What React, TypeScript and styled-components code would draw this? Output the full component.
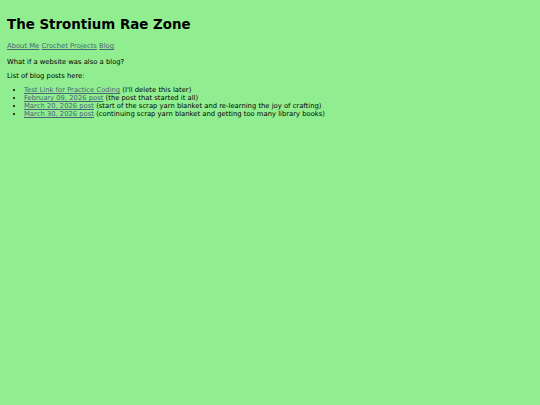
import React from "react";
import styled, { createGlobalStyle } from "styled-components";

const GlobalStyle = createGlobalStyle`
  html, body {
    margin: 0;
    background: #90ee90;
  }
  body {
    font-family: "DejaVu Sans", Verdana, sans-serif;
    font-size: 6.8px;
    color: #000;
  }
`;

const Page = styled.div`
  padding: 7px;
`;

const Title = styled.h1`
  font-size: 13.4px;
  font-weight: bold;
  margin: 10px 0 10px;
`;

const Nav = styled.nav`
  margin: 0 0 8px;
`;

const Link = styled.a`
  color: #4a6478;
  text-decoration: underline;
`;

const Para = styled.p`
  margin: 6px 0 5px;
`;

const PostList = styled.ul`
  margin: 6px 0;
  padding-left: 17px;
  line-height: 8px;
`;

const posts = [
  { label: "Test Link for Practice Coding", note: "(I'll delete this later)" },
  { label: "February 09, 2026 post", note: "(the post that started it all)" },
  {
    label: "March 20, 2026 post",
    note: "(start of the scrap yarn blanket and re-learning the joy of crafting)",
  },
  {
    label: "March 30, 2026 post",
    note: "(continuing scrap yarn blanket and getting too many library books)",
  },
];

export default function App() {
  return (
    <>
      <GlobalStyle />
      <Page>
        <Title>The Strontium Rae Zone</Title>
        <Nav>
          <Link href="#">About Me</Link> <Link href="#">Crochet Projects</Link>{" "}
          <Link href="#">Blog</Link>
        </Nav>
        <Para>What if a website was also a blog?</Para>
        <Para>List of blog posts here:</Para>
        <PostList>
          {posts.map((p) => (
            <li key={p.label}>
              <Link href="#">{p.label}</Link> {p.note}
            </li>
          ))}
        </PostList>
      </Page>
    </>
  );
}
